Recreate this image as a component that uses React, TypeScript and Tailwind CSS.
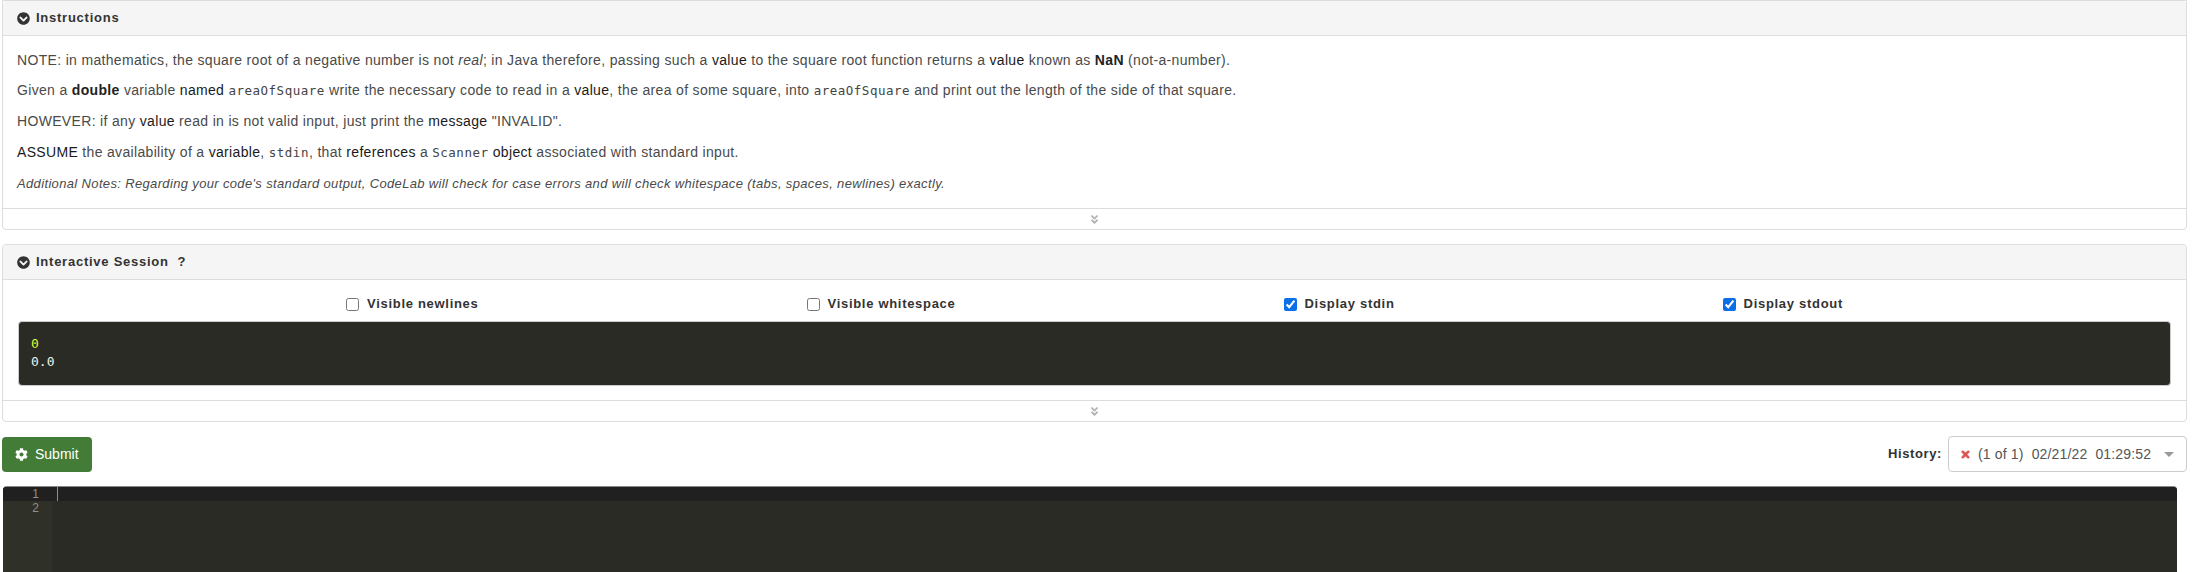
import React from "react";
import { FaChevronCircleDown, FaCog, FaTimes, FaAngleDoubleDown } from "react-icons/fa";

const Mono = ({ children }: { children: React.ReactNode }) => (
  <code className="text-[12.5px] tracking-[0.5px] font-['DejaVu_Sans_Mono',monospace] text-[#444]">{children}</code>
);

const Dark = ({ children }: { children: React.ReactNode }) => (
  <span className="text-[#1a1a1a]">{children}</span>
);

const Header = ({ children }: { children: React.ReactNode }) => (
  <div className="h-[35px] flex items-center gap-[6px] pl-[14px] bg-[#f5f5f5] border-b border-[#ddd] rounded-t-[4px] text-[13px] font-bold tracking-[0.75px] text-[#333]">
    <FaChevronCircleDown className="w-[13px] h-[13px] text-[#333]" />
    <span>{children}</span>
  </div>
);

const Footer = () => (
  <div className="h-[21px] border-t border-[#ddd] flex items-center justify-center">
    <FaAngleDoubleDown className="w-[11px] h-[11px] text-[#b0b0b0]" />
  </div>
);

const Check = ({ label, checked }: { label: string; checked?: boolean }) => (
  <label className="flex items-center gap-[8px] text-[13px] font-bold tracking-[0.7px] text-[#333]">
    <input type="checkbox" defaultChecked={checked} className="w-[13px] h-[13px] m-0 accent-[#0b6fe8]" />
    {label}
  </label>
);

export default function App() {
  return (
    <div className="w-[2200px] h-[572px] overflow-hidden bg-white pl-[2px] pr-[13px] font-['Liberation_Sans',Arial,sans-serif] text-[14px] text-[#4a4a4a]">
      <section className="border border-[#ddd] rounded-b-[4px]">
        <Header>Instructions</Header>
        <div className="h-[172px] px-[14px] pt-[14px] leading-[20px] tracking-[0.33px] flex flex-col gap-[10.2px]">
          <p>
            NOTE: in mathematics, the square root of a negative number is not <em>real</em>; in Java therefore, passing such a <Dark>value</Dark> to the square root function returns a <Dark>value</Dark> known as <b className="text-[#222]">NaN</b> (not-a-number).
          </p>
          <p>
            Given a <b className="text-[#222]">double</b> variable <Dark>named</Dark> <Mono>areaOfSquare</Mono> write the necessary code to read in a <Dark>value</Dark>, the area of some square, into <Mono>areaOfSquare</Mono> and print out the length of the side of that square.
          </p>
          <p>
            HOWEVER: if any <Dark>value</Dark> read in is not valid input, just print the <Dark>message</Dark> "INVALID".
          </p>
          <p>
            <Dark>ASSUME</Dark> the availability of a <Dark>variable</Dark>, <Mono>stdin</Mono>, that <Dark>references</Dark> a <Mono>Scanner</Mono> <Dark>object</Dark> associated with standard input.
          </p>
          <p className="text-[13px] tracking-[0.35px] italic pt-[1px]">
            Additional Notes: Regarding your code's standard output, CodeLab will check for case errors and will check whitespace (tabs, spaces, newlines) exactly.
          </p>
        </div>
        <Footer />
      </section>

      <section className="mt-[14px] border border-[#ddd] rounded-[4px]">
        <Header>Interactive Session&nbsp;&nbsp;?</Header>
        <div className="h-[120px] px-[15px] flex flex-col">
          <div className="h-[41px] pt-[7px] flex items-center justify-evenly">
            <Check label="Visible newlines" />
            <Check label="Visible whitespace" />
            <Check label="Display stdin" checked />
            <Check label="Display stdout" checked />
          </div>
          <div className="h-[65px] bg-[#2a2b24] border border-[#ccc] rounded-[4px] pl-[12px] pt-[13px] font-['DejaVu_Sans_Mono',monospace] text-[13px] leading-[18px] text-[#f0f0e8]">
            <div className="text-[#e6f53c]">0</div>
            <div>0.0</div>
          </div>
        </div>
        <Footer />
      </section>

      <div className="mt-[14px] flex items-center justify-between">
        <button className="h-[35px] w-[90px] flex items-center gap-[7px] pl-[13px] rounded-[4px] bg-[#437c37] text-white text-[14px]">
          <FaCog className="w-[13px] h-[13px]" />
          Submit
        </button>
        <div className="flex items-center gap-[6px]">
          <span className="text-[13px] font-bold tracking-[0.6px] text-[#333]">History:</span>
          <div className="h-[36px] w-[239px] border border-[#ccc] rounded-[4px] flex items-center pl-[11px] text-[14px] tracking-[0.15px] text-[#555]">
            <FaTimes className="w-[11px] h-[11px] text-[#d9534f] stroke-current stroke-[40] mr-[7px]" />
            <span className="whitespace-pre">(1 of 1)  02/21/22  01:29:52</span>
            <span className="ml-[13px] w-0 h-0 border-x-[5px] border-x-transparent border-t-[5px] border-t-[#999]" />
          </div>
        </div>
      </div>

      <div className="mt-[14px] ml-[1px] mr-[10px] h-[100px] rounded-t-[4px] bg-[#2a2b24] border-t border-[#888] flex overflow-hidden font-['Liberation_Sans',Arial,sans-serif] text-[12px] leading-[14px] text-[#8f908a]">
        <div className="w-[49px] bg-[#2f3129] flex flex-col text-right">
          <div className="h-[14px] bg-[#202020] pr-[13px]">1</div>
          <div className="pr-[13px]">2</div>
        </div>
        <div className="flex-1">
          <div className="h-[14px] bg-[#202020] pl-[5px]">
            <div className="w-[1px] h-[14px] bg-[#8f908a]" />
          </div>
        </div>
      </div>
    </div>
  );
}
